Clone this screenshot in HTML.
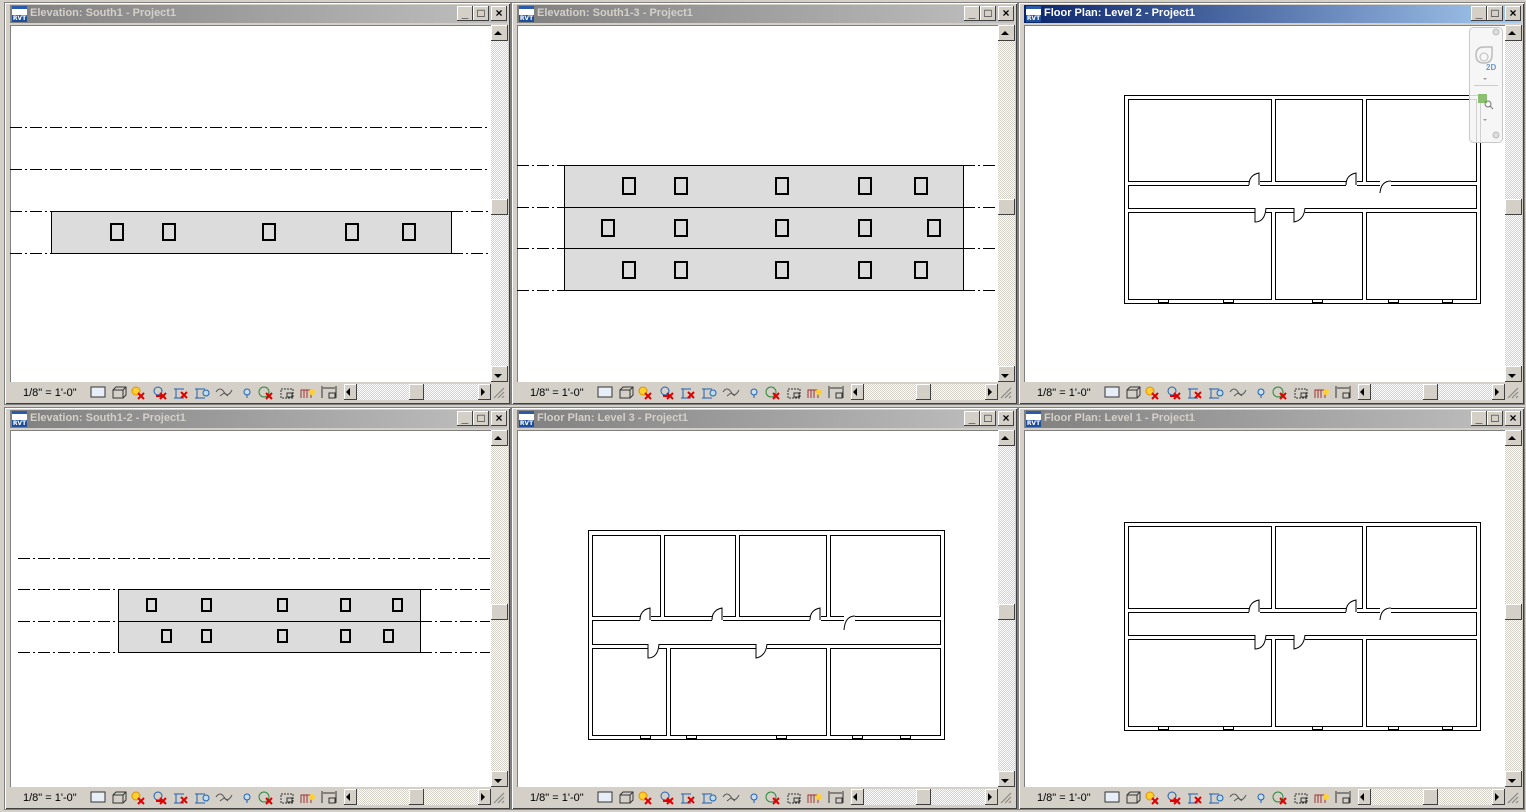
<!DOCTYPE html>
<html><head><meta charset="utf-8">
<style>
*{margin:0;padding:0;box-sizing:border-box}
body{width:1526px;height:812px;background:#d4d0c8;position:relative;overflow:hidden;font-family:"Liberation Sans",sans-serif}
.win{position:absolute;width:507px;height:403px;background:#d4d0c8;border:1px solid #808080;box-shadow:inset 1px 1px 0 #fff,inset -1px -1px 0 #404040}
.tb{position:absolute;left:5px;top:2px;width:497px;height:18px;background:linear-gradient(90deg,#808080,#c0c0c0)}
.tb.act{background:linear-gradient(90deg,#0a246a,#a6caf0)}
.tt{position:absolute;left:20px;top:2px;font-size:11px;font-weight:bold;color:#d4d0c8;white-space:nowrap;font-family:"Liberation Sans",sans-serif}
.act .tt{color:#fff}
.ic{position:absolute;left:2px;top:1px;width:15px;height:16px;background:#fff;border-top:3px solid #2a5aa8}
.ic:after{content:"RVT";position:absolute;left:0;bottom:0;width:15px;height:7px;background:#1f4f9a;color:#fff;font-size:6px;line-height:7px;font-family:"DejaVu Sans",sans-serif;text-align:center;font-weight:bold}
.bt{position:absolute;top:1px;width:16px;height:15px;background:#d4d0c8;box-shadow:inset -1px -1px 0 #404040,inset 1px 1px 0 #fff;font-size:12px;line-height:14px;text-align:center;color:#000;font-weight:bold}
.ct{position:absolute;left:5px;top:22px;width:481px;height:357px;background:#fff;border-left:1px solid #808080;border-top:1px solid #808080}
.vs{position:absolute;left:486px;top:22px;width:17px;height:357px;background:repeating-conic-gradient(#d4d0c8 0 25%,#fff 0 50%) 0 0/2px 2px}
.ar{position:absolute;left:0;width:17px;height:16px;background:#d4d0c8;box-shadow:inset -1px -1px 0 #404040,inset 1px 1px 0 #fff}
.sb{position:absolute;left:5px;top:379px;width:498px;height:20px;background:#d4d0c8}
.sc{position:absolute;left:13px;top:5px;font-size:11px;color:#000;font-family:"Liberation Sans",sans-serif}
.hs{position:absolute;left:339px;top:381px;width:147px;height:16px;background:repeating-conic-gradient(#d4d0c8 0 25%,#fff 0 50%) 0 0/2px 2px}
.ha{position:absolute;top:0;width:13px;height:16px;background:#d4d0c8;box-shadow:inset -1px -1px 0 #404040,inset 1px 1px 0 #fff}
svg{position:absolute}
</style></head><body>

<div class="win" style="left:4px;top:2px">
 <div class="tb"><span class="ic"></span><span class="tt">Elevation: South1 - Project1</span>
 <span class="bt" style="left:447px">_</span><span class="bt" style="left:463px">□</span><span class="bt" style="left:481px">×</span></div>
 <div class="ct"></div>
 <div class="vs"><div class="ar" style="top:0"></div><div class="ar" style="top:174px"></div><div class="ar" style="top:341px"></div></div>
 <div class="sb"><span class="sc">1/8" = 1'-0"</span></div>
 <div class="hs"><div class="ha" style="left:0"></div><div class="ha" style="left:65px;width:15px"></div><div class="ha" style="left:134px"></div></div>
</div>
<div class="win" style="left:511px;top:2px">
 <div class="tb"><span class="ic"></span><span class="tt">Elevation: South1-3 - Project1</span>
 <span class="bt" style="left:447px">_</span><span class="bt" style="left:463px">□</span><span class="bt" style="left:481px">×</span></div>
 <div class="ct"></div>
 <div class="vs"><div class="ar" style="top:0"></div><div class="ar" style="top:174px"></div><div class="ar" style="top:341px"></div></div>
 <div class="sb"><span class="sc">1/8" = 1'-0"</span></div>
 <div class="hs"><div class="ha" style="left:0"></div><div class="ha" style="left:65px;width:15px"></div><div class="ha" style="left:134px"></div></div>
</div>
<div class="win" style="left:1018px;top:2px">
 <div class="tb act"><span class="ic"></span><span class="tt">Floor Plan: Level 2 - Project1</span>
 <span class="bt" style="left:447px">_</span><span class="bt" style="left:463px">□</span><span class="bt" style="left:481px">×</span></div>
 <div class="ct"></div>
 <div class="vs"><div class="ar" style="top:0"></div><div class="ar" style="top:174px"></div><div class="ar" style="top:341px"></div></div>
 <div class="sb"><span class="sc">1/8" = 1'-0"</span></div>
 <div class="hs"><div class="ha" style="left:0"></div><div class="ha" style="left:65px;width:15px"></div><div class="ha" style="left:134px"></div></div>
</div>
<div class="win" style="left:4px;top:407px">
 <div class="tb"><span class="ic"></span><span class="tt">Elevation: South1-2 - Project1</span>
 <span class="bt" style="left:447px">_</span><span class="bt" style="left:463px">□</span><span class="bt" style="left:481px">×</span></div>
 <div class="ct"></div>
 <div class="vs"><div class="ar" style="top:0"></div><div class="ar" style="top:174px"></div><div class="ar" style="top:341px"></div></div>
 <div class="sb"><span class="sc">1/8" = 1'-0"</span></div>
 <div class="hs"><div class="ha" style="left:0"></div><div class="ha" style="left:65px;width:15px"></div><div class="ha" style="left:134px"></div></div>
</div>
<div class="win" style="left:511px;top:407px">
 <div class="tb"><span class="ic"></span><span class="tt">Floor Plan: Level 3 - Project1</span>
 <span class="bt" style="left:447px">_</span><span class="bt" style="left:463px">□</span><span class="bt" style="left:481px">×</span></div>
 <div class="ct"></div>
 <div class="vs"><div class="ar" style="top:0"></div><div class="ar" style="top:174px"></div><div class="ar" style="top:341px"></div></div>
 <div class="sb"><span class="sc">1/8" = 1'-0"</span></div>
 <div class="hs"><div class="ha" style="left:0"></div><div class="ha" style="left:65px;width:15px"></div><div class="ha" style="left:134px"></div></div>
</div>
<div class="win" style="left:1018px;top:407px">
 <div class="tb"><span class="ic"></span><span class="tt">Floor Plan: Level 1 - Project1</span>
 <span class="bt" style="left:447px">_</span><span class="bt" style="left:463px">□</span><span class="bt" style="left:481px">×</span></div>
 <div class="ct"></div>
 <div class="vs"><div class="ar" style="top:0"></div><div class="ar" style="top:174px"></div><div class="ar" style="top:341px"></div></div>
 <div class="sb"><span class="sc">1/8" = 1'-0"</span></div>
 <div class="hs"><div class="ha" style="left:0"></div><div class="ha" style="left:65px;width:15px"></div><div class="ha" style="left:134px"></div></div>
</div>

<svg width="1526" height="812" style="left:0;top:0">
<defs>
 <g id="icons" fill="none" stroke-width="1">
  <rect x="1" y="3" width="14" height="10" stroke="#333" fill="#e8eef8"/>
  <path d="M23 6h10v8H23zM23 6l3-3h10v8l-3 3M33 6l3-3" stroke="#333"/>
  <circle cx="46" cy="7" r="4" fill="#ffd030" stroke="#e09000"/><path d="M48 9l6 6M54 9l-6 6" stroke="#d00" stroke-width="2"/>
  <circle cx="68" cy="7" r="4" stroke="#2060b0"/><path d="M66 12h6M70 9l6 6M76 9l-6 6" stroke="#d00" stroke-width="2"/>
  <path d="M84 5h10M86 5v9M84 14h10" stroke="#2060b0"/><path d="M91 8l6 6M97 8l-6 6" stroke="#d00" stroke-width="2"/>
  <path d="M105 5h10M107 5v9M105 14h10" stroke="#2060b0"/><circle cx="116" cy="9" r="3" fill="#bde" stroke="#2060b0"/>
  <path d="M126 8q4-6 8 0q4 6 8-2M130 12l4-3 4 3" stroke="#555"/>
  <circle cx="157" cy="8" r="3" stroke="#2060b0" fill="#cde"/><path d="M157 11v3" stroke="#2060b0"/>
  <circle cx="174" cy="8" r="5" stroke="#2a8a3a"/><path d="M176 9l6 6M182 9l-6 6" stroke="#d00" stroke-width="2"/>
  <rect x="191" y="5" width="12" height="9" stroke="#333" stroke-dasharray="2 1"/><rect x="197" y="9" width="5" height="4" stroke="#333"/>
  <path d="M211 14V6h10v8M214 6v8M217 6v8" stroke="#a03030"/><circle cx="222" cy="8" r="3" fill="#ffd030"/>
  <path d="M232 2v12M246 2v12M233 4h12" stroke="#333"/><rect x="239" y="9" width="6" height="5" stroke="#333"/>
 </g>
</defs>

<use href="#icons" x="90" y="384"/><use href="#icons" x="597" y="384"/><use href="#icons" x="1104" y="384"/>
<use href="#icons" x="90" y="789"/><use href="#icons" x="597" y="789"/><use href="#icons" x="1104" y="789"/>

<g fill="#000">
 <path d="M494 35l4-4 4 4z"/><path d="M1001 35l4-4 4 4z"/><path d="M1508 35l4-4 4 4z"/>
 <path d="M494 440l4-4 4 4z"/><path d="M1001 440l4-4 4 4z"/><path d="M1508 440l4-4 4 4z"/>
 <path d="M494 374l4 4 4-4z"/><path d="M1001 374l4 4 4-4z"/><path d="M1508 374l4 4 4-4z"/>
 <path d="M494 779l4 4 4-4z"/><path d="M1001 779l4 4 4-4z"/><path d="M1508 779l4 4 4-4z"/>
 <path d="M350 388l-4 4 4 4z"/><path d="M857 388l-4 4 4 4z"/><path d="M1364 388l-4 4 4 4z"/>
 <path d="M350 793l-4 4 4 4z"/><path d="M857 793l-4 4 4 4z"/><path d="M1364 793l-4 4 4 4z"/>
 <path d="M481 388l4 4-4 4z"/><path d="M988 388l4 4-4 4z"/><path d="M1495 388l4 4-4 4z"/>
 <path d="M481 793l4 4-4 4z"/><path d="M988 793l4 4-4 4z"/><path d="M1495 793l4 4-4 4z"/>
</g>
<g stroke="#808080"><path d="M494 398l10-10M498 398l6-6M502 398l2-2"/><path d="M1001 398l10-10M1005 398l6-6M1009 398l2-2"/><path d="M1508 398l10-10M1512 398l6-6M1516 398l2-2"/>
<path d="M494 803l10-10M498 803l6-6M502 803l2-2"/><path d="M1001 803l10-10M1005 803l6-6M1009 803l2-2"/><path d="M1508 803l10-10M1512 803l6-6M1516 803l2-2"/></g>

<g stroke="#000" stroke-width="1" fill="none">
 <g stroke-dasharray="12 3 2 3">
  <path d="M10 127.5H488M10 169.5H488M10 211.5H51M451 211.5H488M10 253.5H51M451 253.5H488"/>
 </g>
 <rect x="51.5" y="211.5" width="400" height="42" fill="#dcdcdc"/>
 <g stroke-width="2"><rect x="111" y="224" width="12" height="16"/><rect x="163" y="224" width="12" height="16"/><rect x="263" y="224" width="12" height="16"/><rect x="346" y="224" width="12" height="16"/><rect x="403" y="224" width="12" height="16"/></g>
</g>

<g stroke="#000" stroke-width="1" fill="none">
 <g stroke-dasharray="12 3 2 3">
  <path d="M517 165.5H564M963 165.5H996M517 207.5H564M963 207.5H996M517 248.5H564M963 248.5H996M517 290.5H564M963 290.5H996"/>
 </g>
 <rect x="564.5" y="165.5" width="399" height="125" fill="#dcdcdc"/>
 <path d="M564 207.5H963M564 248.5H963"/>
 <g stroke-width="2">
  <rect x="623" y="178" width="12" height="16"/><rect x="675" y="178" width="12" height="16"/><rect x="776" y="178" width="12" height="16"/><rect x="859" y="178" width="12" height="16"/><rect x="915" y="178" width="12" height="16"/>
  <rect x="602" y="220" width="12" height="16"/><rect x="675" y="220" width="12" height="16"/><rect x="776" y="220" width="12" height="16"/><rect x="859" y="220" width="12" height="16"/><rect x="928" y="220" width="12" height="16"/>
  <rect x="623" y="262" width="12" height="16"/><rect x="675" y="262" width="12" height="16"/><rect x="776" y="262" width="12" height="16"/><rect x="859" y="262" width="12" height="16"/><rect x="915" y="262" width="12" height="16"/>
 </g>
</g>

<g stroke="#000" stroke-width="1" fill="none">
 <g stroke-dasharray="12 3 2 3">
  <path d="M18 558.5H490M18 589.5H118M420 589.5H490M18 621.5H118M420 621.5H490M18 652.5H118M420 652.5H490"/>
 </g>
 <rect x="118.5" y="589.5" width="302" height="63" fill="#dcdcdc"/>
 <path d="M118 621.5H420"/>
 <g stroke-width="2">
  <rect x="147" y="599" width="9" height="12"/><rect x="202" y="599" width="9" height="12"/><rect x="278" y="599" width="9" height="12"/><rect x="341" y="599" width="9" height="12"/><rect x="393" y="599" width="9" height="12"/>
  <rect x="162" y="630" width="9" height="12"/><rect x="202" y="630" width="9" height="12"/><rect x="278" y="630" width="9" height="12"/><rect x="341" y="630" width="9" height="12"/><rect x="384" y="630" width="9" height="12"/>
 </g>
</g>

<g id="fp" stroke="#000" stroke-width="1" fill="#fff">
 <rect x="1124.5" y="95.5" width="356" height="208"/>
 <rect x="1128.5" y="99.5" width="143" height="82"/>
 <rect x="1275.5" y="99.5" width="87" height="82"/>
 <rect x="1366.5" y="99.5" width="110" height="82"/>
 <rect x="1128.5" y="185.5" width="348" height="23"/>
 <rect x="1128.5" y="212.5" width="143" height="87"/>
 <rect x="1275.5" y="212.5" width="87" height="87"/>
 <rect x="1366.5" y="212.5" width="110" height="87"/>
 <g fill="#fff" stroke="none"><rect x="1249" y="180" width="11" height="7"/><rect x="1346" y="180" width="11" height="7"/><rect x="1380" y="180" width="11" height="7"/><rect x="1255" y="207" width="11" height="7"/><rect x="1294" y="207" width="11" height="7"/></g>
 <g fill="none"><path d="M1249 185q0-10 10-12v12M1346 185q0-10 10-12v12M1391 181q-10 0-11 12"/><path d="M1255 208v14q10 0 11-14M1294 208v14q10-2 11-14"/></g>
 <g fill="#fff"><rect x="1158.5" y="299.5" width="10" height="3"/><rect x="1223.5" y="299.5" width="10" height="3"/><rect x="1312.5" y="299.5" width="10" height="3"/><rect x="1388.5" y="299.5" width="10" height="3"/><rect x="1442.5" y="299.5" width="10" height="3"/></g>
</g>
<use href="#fp" x="0" y="427"/>

<g stroke="#000" stroke-width="1" fill="#fff">
 <rect x="588.5" y="530.5" width="356" height="209"/>
 <rect x="592.5" y="535.5" width="68" height="81"/>
 <rect x="664.5" y="535.5" width="71" height="81"/>
 <rect x="739.5" y="535.5" width="87" height="81"/>
 <rect x="830.5" y="535.5" width="110" height="81"/>
 <rect x="592.5" y="620.5" width="348" height="24"/>
 <rect x="592.5" y="648.5" width="74" height="87"/>
 <rect x="670.5" y="648.5" width="156" height="87"/>
 <rect x="830.5" y="648.5" width="110" height="87"/>
 <g fill="#fff" stroke="none"><rect x="640" y="615" width="11" height="7"/><rect x="712" y="615" width="11" height="7"/><rect x="810" y="615" width="11" height="7"/><rect x="844" y="615" width="11" height="7"/><rect x="648" y="643" width="11" height="7"/><rect x="756" y="643" width="11" height="7"/></g>
 <g fill="none"><path d="M640 620q0-10 10-12v12M712 620q0-10 10-12v12M810 620q0-10 10-12v12M855 616q-10 0-11 14M648 644v14q10 0 11-14M756 644v14q10-2 11-14"/></g>
 <g fill="#fff"><rect x="640.5" y="735.5" width="10" height="3"/><rect x="686.5" y="735.5" width="10" height="3"/><rect x="776.5" y="735.5" width="10" height="3"/><rect x="852.5" y="735.5" width="10" height="3"/><rect x="900.5" y="735.5" width="10" height="3"/></g>
</g>

<g>
 <rect x="1469.5" y="27.5" width="33" height="115" rx="4" fill="#f4f4f4" fill-opacity="0.85" stroke="#c8c8c8"/>
 <circle cx="1496" cy="32" r="3" fill="#ddd" stroke="#bbb"/>
 <path d="M1476 55q0-8 8-8h8v8q0 8-8 8q-8 0-8-8z" fill="none" stroke="#bbb" stroke-width="1.5"/>
 <circle cx="1484" cy="57" r="4" fill="none" stroke="#bbb"/>
 <text x="1486" y="70" font-size="8" font-weight="bold" fill="#6a9ad0" font-family="Liberation Sans,sans-serif">2D</text>
 <path d="M1483 78l2 2 2-2z" fill="#999"/>
 <path d="M1474 85.5H1498" stroke="#ccc"/>
 <rect x="1478" y="94" width="9" height="9" fill="#8ac070"/>
 <circle cx="1488" cy="104" r="3" fill="none" stroke="#777"/><path d="M1490 106l3 3" stroke="#777"/>
 <path d="M1483 119l2 2 2-2z" fill="#999"/>
 <circle cx="1496" cy="135" r="3" fill="#ddd" stroke="#bbb"/>
</g>
</svg>
</body></html>
